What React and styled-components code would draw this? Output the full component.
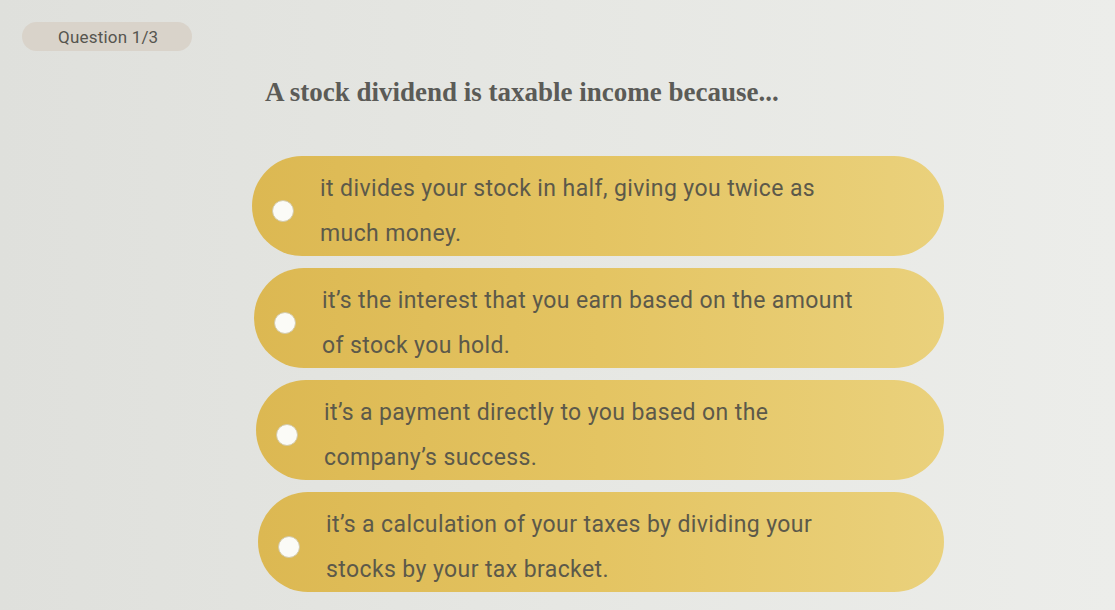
import React from 'react';
import styled, { createGlobalStyle } from 'styled-components';

const GlobalStyle = createGlobalStyle`
  html, body {
    margin: 0;
    padding: 0;
    background: #e3e4e0;
  }
`;

const Page = styled.div`
  width: 1115px;
  height: 610px;
  overflow: hidden;
  box-sizing: border-box;
  padding: 22px 0 0 22px;
  background: linear-gradient(90deg, #dfe0dc 0%, #e6e7e3 50%, #ecedea 100%);
  font-family: Roboto, "Liberation Sans", sans-serif;
`;

const Counter = styled.div`
  display: flex;
  align-items: center;
  width: 170px;
  height: 29px;
  box-sizing: border-box;
  padding-left: 36px;
  border-radius: 15px;
  background: #d9d3ca;
  color: #56554f;
  font-size: 17px;
  letter-spacing: 0.2px;
`;

const Title = styled.h1`
  margin: 26px 0 0 243px;
  font-family: "Liberation Serif", serif;
  font-weight: bold;
  font-size: 27px;
  color: #5b5b57;
`;

const Options = styled.div`
  display: flex;
  flex-direction: column;
  gap: 12px;
  width: 692px;
  margin: 48px 0 0 230px;
`;

const Option = styled.button`
  display: flex;
  align-items: center;
  gap: 26px;
  height: 100px;
  margin-left: ${(p) => p.$shift}px;
  padding: 10px 0 0 20px;
  border: none;
  border-radius: 50px;
  background: linear-gradient(90deg, #dcb852 0%, #e4c462 50%, #ead17c 100%);
  text-align: left;
  cursor: pointer;
`;

const Radio = styled.span`
  flex: none;
  width: 22px;
  height: 22px;
  border-radius: 50%;
  background: #fbfbf7;
  border: 1px solid #d2c9a8;
  box-sizing: border-box;
`;

const Label = styled.span`
  font-family: Roboto, "Liberation Sans", sans-serif;
  font-size: 23px;
  letter-spacing: 0.4px;
  line-height: 45px;
  color: #5c594a;
`;

const answers = [
  ['it divides your stock in half, giving you twice as', 'much money.'],
  ['it\u2019s the interest that you earn based on the amount', 'of stock you hold.'],
  ['it\u2019s a payment directly to you based on the', 'company\u2019s success.'],
  ['it\u2019s a calculation of your taxes by dividing your', 'stocks by your tax bracket.'],
];

export default function App() {
  return (
    <>
      <GlobalStyle />
      <Page>
        <Counter>Question 1/3</Counter>
        <Title>A stock dividend is taxable income because...</Title>
        <Options>
          {answers.map((lines, i) => (
            <Option key={i} $shift={i * 2}>
              <Radio />
              <Label>
                {lines[0]}
                <br />
                {lines[1]}
              </Label>
            </Option>
          ))}
        </Options>
      </Page>
    </>
  );
}
